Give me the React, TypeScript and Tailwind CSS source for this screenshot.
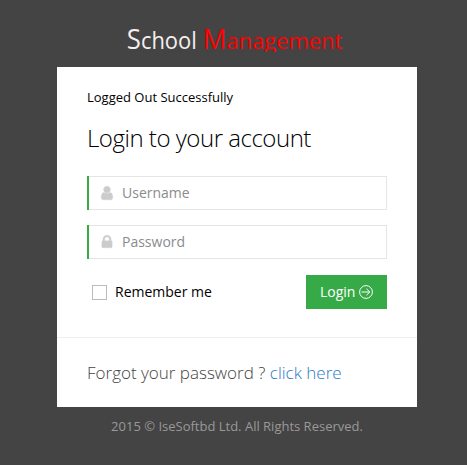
import type { ReactNode } from "react";

const USER_PATH =
  "M1536 1399q0 109-62.5 187t-150.5 78h-854q-88 0-150.5-78t-62.5-187q0-85 8.5-160.5t31.5-152 58.5-131 94-89 134.5-34.5q131 128 313 128t313-128q76 0 134.5 34.5t94 89 58.5 131 31.5 152 8.5 160.5zm-256-887q0 159-112.5 271.5t-271.5 112.5-271.5-112.5-112.5-271.5 112.5-271.5 271.5-112.5 271.5 112.5 112.5 271.5z";
const LOCK_PATH =
  "M640 768h512v-192q0-106-75-181t-181-75-181 75-75 181v192zm832 96v576q0 40-28 68t-68 28h-960q-40 0-68-28t-28-68v-576q0-40 28-68t68-28h32v-192q0-184 132-316t316-132 316 132 132 316v192h32q40 0 68 28t28 68z";

function Logo() {
  return (
    <svg className="h-[60px] w-[230px] font-['Open_Sans','Noto_Sans',sans-serif]" viewBox="0 0 230 60" aria-label="School Management">
      <text x="6.8" y="48.8" fill="#f5eeee" fontSize="23" textLength="70" lengthAdjust="spacingAndGlyphs">
        <tspan fontSize="27">S</tspan>chool
      </text>
      <text x="82.8" y="48.8" fill="#ff0000" fontSize="22" textLength="139.5" lengthAdjust="spacingAndGlyphs">
        <tspan fontSize="26.5">M</tspan>anagement
      </text>
      <rect y="51.8" width="230" height="8" fill="#444444" />
    </svg>
  );
}

function Field({ icon, type, placeholder }: { icon: ReactNode; type: string; placeholder: string }) {
  return (
    <label className="flex h-[34px]">
      <span className="w-0.5 bg-[#35aa47]" />
      <span className="flex flex-1 items-center border border-l-0 border-[#e5e5e5] pl-[9.5px]">
        {icon}
        <input
          type={type}
          placeholder={placeholder}
          className="ml-[7.5px] min-w-0 flex-1 bg-transparent text-sm outline-none placeholder:text-[#8b8b8b]"
        />
      </span>
    </label>
  );
}

function FieldIcon({ path }: { path: string }) {
  return (
    <svg className="size-4 shrink-0" viewBox="0 0 1792 1792" fill="#cccccc" stroke="#cccccc" strokeWidth="40">
      <path d={path} />
    </svg>
  );
}

export default function App() {
  return (
    <div className="flex h-screen flex-col items-center overflow-hidden bg-[#444444] font-['Open_Sans','Noto_Sans',sans-serif] text-[13px] text-black">
      <header className="flex h-[67px] w-full pl-[120px]">
        <Logo />
      </header>
      <main className="ml-[7px] h-[340px] w-[360px] bg-white">
        <form className="h-[270px] px-[30px] pt-5">
          <p className="h-5 leading-5">Logged Out Successfully</p>
          <h1 className="mt-3 h-[38px] whitespace-nowrap text-2xl font-light leading-[38px] tracking-[-0.47px]">
            Login to your account
          </h1>
          <div className="mt-[19px] flex flex-col gap-[15px]">
            <Field icon={<FieldIcon path={USER_PATH} />} type="text" placeholder="Username" />
            <Field icon={<FieldIcon path={LOCK_PATH} />} type="password" placeholder="Password" />
          </div>
          <div className="mt-4 flex h-[34px] items-center justify-between">
            <label className="flex items-center pl-[5px] text-sm">
              <input type="checkbox" className="size-[15px] appearance-none border border-[#bbbbbb] bg-white" />
              <span className="ml-2">Remember me</span>
            </label>
            <button type="button" className="flex h-[34px] w-[81px] items-center bg-[#35aa47] pl-3.5 text-sm text-white">
              Login
              <svg className="ml-1 size-[14px]" viewBox="0 0 14 14" fill="none" stroke="white">
                <circle cx="7" cy="7" r="6.4" />
                <path d="M2.5 7h8.3M7.4 3.7L10.8 7l-3.4 3.3" />
              </svg>
            </button>
          </div>
        </form>
        <div className="h-[70px] border-t border-[#eeeeee] px-[30px]">
          <p className="whitespace-nowrap pt-[22px] text-[17px] font-light leading-[26px] text-[#444444]">
            Forgot your password ? <a className="text-[#1f7ac6]">click here</a>
          </p>
        </div>
      </main>
      <footer className="ml-[7px] pt-[9px] leading-5 text-[#999999]">2015 © IseSoftbd Ltd. All Rights Reserved.</footer>
    </div>
  );
}
